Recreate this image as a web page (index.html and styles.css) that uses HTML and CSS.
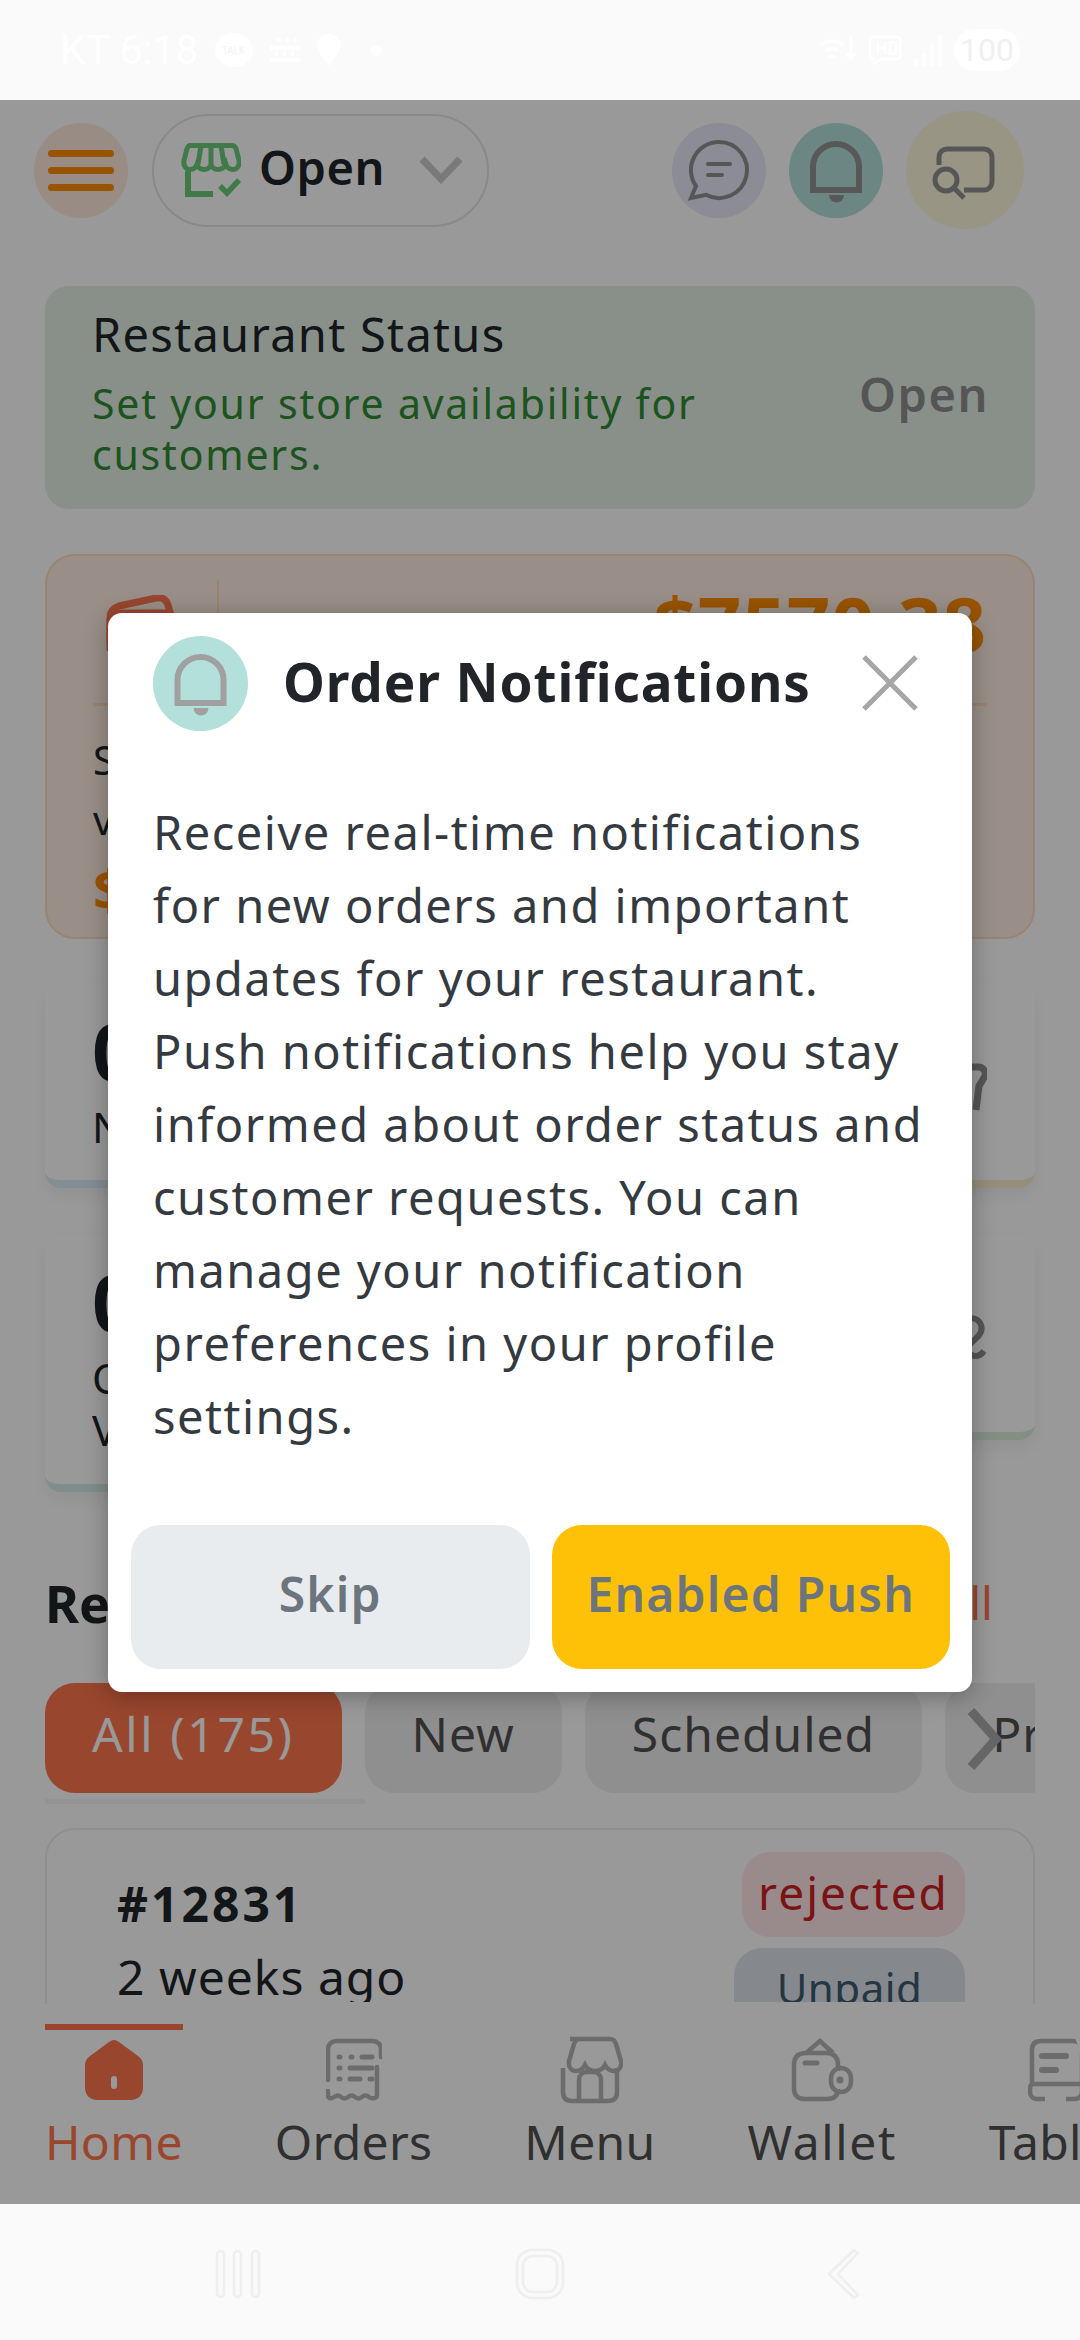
FILE: index.html
```html
<!DOCTYPE html>
<html lang="en">
<head>
    <meta charset="utf-8" />
    <meta content="width=device-width, initial-scale=1.0" name="viewport" />
    <title>Restaurant Dashboard</title>
    <link rel="stylesheet" href="styles.css">
</head>
<body>
    <div class="phone">
        <!-- system status bar -->
        <div class="status-bar">
            <div class="status-left">
                <span class="clock">KT 6:18</span>
                <span class="talk">TALK</span>
                <svg class="sys-icon" width="32" height="24" viewBox="0 0 32 24"><path d="M8 2h4M16 2h4M24 2h3M1 10h30M6 16h3M14 16h3M22 16h3M1 22h30" stroke="#fff" stroke-width="4"/></svg>
                <svg class="sys-icon" width="24" height="32" viewBox="0 0 24 32"><path d="M12 32C6 22 0 18 0 11a12 11 0 0 1 24 0c0 7-6 11-12 21z" fill="#fff"/></svg>
                <span class="status-dot"></span>
            </div>
            <div class="status-right">
                <svg width="38" height="32" viewBox="0 0 38 32"><path d="M2 11a20 20 0 0 1 24 0M7 17a13 13 0 0 1 14 0M11 23a7 7 0 0 1 6 0M33 2v22M29 20l4 5 4-5" fill="none" stroke="#fff" stroke-width="3"/></svg>
                <svg width="34" height="30" viewBox="0 0 34 30"><path d="M5 2h24a3 3 0 0 1 3 3v16a3 3 0 0 1-3 3H12l-6 5v-5a4 4 0 0 1-4-3V5a3 3 0 0 1 3-3zM10 7v12M10 13h7M17 7v12M22 7v12h3a3 3 0 0 0 3-3v-6a3 3 0 0 0-3-3z" fill="none" stroke="#fff" stroke-width="2.5"/></svg>
                <svg width="28" height="30" viewBox="0 0 28 30"><path d="M2 30v-6M10 30V18M18 30V9M26 30V0" stroke="#fff" stroke-width="3.5"/></svg>
                <span class="battery">100</span>
            </div>
        </div>

        <div class="app">
            <div class="content">
                <div class="top-bar">
                    <button class="round-btn menu-btn">
                        <span class="burger"></span><span class="burger"></span><span class="burger"></span>
                    </button>
                    <div class="store-pill">
                        <svg width="60" height="54" viewBox="0 0 60 54">
                            <path d="M9 2.500h42c2 0 3 1 4 3l3 12c1 5-2 9-6 9-3 0-6-2-7-5-1 3-5 5-8 5s-6-2-7-5c-1 3-4 5-7 5s-6-2-7-5c-1 3-4 5-7 5-4 0-7-4-6-9l3-12c1-2 2-3 3-3zM20 3l-3 18M30 3v18M40 3l3 18" fill="none" stroke="#69cb79" stroke-width="5"/>
                            <path d="M7 28v23h25" fill="none" stroke="#69cb79" stroke-width="6"/>
                            <path d="M39 43l7 7 12-13" fill="none" stroke="#69cb79" stroke-width="5.500"/>
                        </svg>
                        <span class="store-label">Open</span>
                        <svg class="pill-chevron" width="44" height="28" viewBox="0 0 44 28"><path d="M3 3l19 20L41 3" fill="none" stroke="#cbcbcb" stroke-width="7"/></svg>
                    </div>
                    <div class="top-actions">
                        <button class="round-btn chat-btn">
                            <svg width="94" height="95" viewBox="0 0 94 95"><path d="M47 19a28 28 0 1 1-13 52.800L19 75l5-12A28 28 0 0 1 47 19z" fill="none" stroke="#909090" stroke-width="4"/><path d="M36 41h22M36 52h14" stroke="#909090" stroke-width="4" stroke-linecap="round"/></svg>
                        </button>
                        <button class="round-btn bell-btn">
                            <svg width="94" height="95" viewBox="0 0 94 95"><path d="M24 67V44a23 23 0 0 1 46 0v23z" fill="none" stroke="#939393" stroke-width="6"/><path d="M40 72h15a7.500 7.500 0 0 1-15 0z" fill="#939393"/></svg>
                        </button>
                        <button class="round-btn cast-btn">
                            <svg width="118" height="118" viewBox="0 0 118 118"><path d="M33 54v-8a8 8 0 0 1 8-8h37a8 8 0 0 1 8 8v25a8 8 0 0 1-8 8H58" fill="none" stroke="#909090" stroke-width="5"/><circle cx="40" cy="69" r="11" fill="none" stroke="#909090" stroke-width="5"/><path d="M48 77l10 10" stroke="#909090" stroke-width="5"/></svg>
                        </button>
                    </div>
                </div>

                <div class="status-card">
                    <div>
                        <div class="status-title">Restaurant Status</div>
                        <div class="status-sub">Set your store availability for customers.</div>
                    </div>
                    <div class="status-value">Open</div>
                </div>

                <div class="sales-card">
                    <div class="sales-top">
                        <svg class="sales-icon" width="72" height="60" viewBox="0 0 72 60"><path d="M4 56V22c0-6 3-9 9-11L50 3c6-1 10 1 12 7l4 14" fill="none" stroke="#ff764d" stroke-width="7"/><rect x="4" y="18" width="64" height="38" rx="8" fill="none" stroke="#ff764d" stroke-width="7"/></svg>
                        <span class="sales-divider"></span>
                        <div class="sales-label">Total Sales</div>
                        <div class="sales-amount">$7570.38</div>
                    </div>
                    <div class="sales-desc">Sales this<br>vs last week</div>
                    <div class="sales-change">$0.00</div>
                </div>

                <div class="stats">
                    <div class="stat-card stat-blue">
                        <div class="stat-num">0</div>
                        <div class="stat-text">New Orders</div>
                    </div>
                    <div class="stat-card stat-yellow">
                        <svg class="stat-icon" width="120" height="60" viewBox="0 0 120 60"><path d="M2 4h109a7 7 0 0 1 7 9l-6 10-3 24" fill="none" stroke="#8e8e8e" stroke-width="7"/></svg>
                    </div>
                    <div class="stat-card stat-teal">
                        <div class="stat-num">0</div>
                        <div class="stat-text">Orders<br>Value</div>
                    </div>
                    <div class="stat-card stat-green">
                        <svg class="stat-icon" width="120" height="60" viewBox="0 0 120 60"><path d="M103 4c10 0 13 8 11 14-3 7-9 8-12 14-2 5 1 10 6 10 4 0 7-2 9-5" fill="none" stroke="#8e8e8e" stroke-width="6"/></svg>
                    </div>
                </div>

                <div class="section-head">
                    <h2 class="section-title">Recent Orders</h2>
                    <a class="section-link">View All</a>
                </div>

                <div class="tabs-wrap">
                    <div class="tabs">
                        <span class="tab tab-active">All (175)</span>
                        <span class="tab">New</span>
                        <span class="tab">Scheduled</span>
                        <span class="tab">Preparing</span>
                    </div>
                    <svg class="tabs-arrow" width="36" height="62" viewBox="0 0 36 62"><path d="M5 3l25 28L5 59" fill="none" stroke="#a8a8a8" stroke-width="9"/></svg>
                </div>
                <div class="tabs-scroll"></div>

                <div class="order-card">
                    <div>
                        <div class="order-id">#12831</div>
                        <div class="order-time">2 weeks ago</div>
                    </div>
                    <div class="order-badges">
                        <span class="badge badge-rejected">rejected</span>
                        <span class="badge badge-unpaid">Unpaid</span>
                    </div>
                </div>
            </div>

            <nav class="bottom-nav">
                <div class="nav-item nav-active">
                    <svg width="58" height="60" viewBox="0 0 58 60"><path d="M24 2a8 8 0 0 1 10 0l19 14c3 2 5 5 5 9v23c0 7-5 12-12 12H12C5 60 0 55 0 48V25c0-4 2-7 5-9z" fill="#ff764d"/><rect x="26" y="36" width="6" height="13" rx="3" fill="#ffffff"/></svg>
                    <span>Home</span>
                </div>
                <div class="nav-item">
                    <svg width="56" height="62" viewBox="0 0 56 62"><path d="M55 18V10a8 8 0 0 0-8-8H10a8 8 0 0 0-8 8v31M2 52v4c0 4 3 4 6 2s5-2 7 0 5 2 7 0 5-2 7 0 5 2 7 0 5-2 7 0 8 2 8-2V28" fill="none" stroke="#b4b4b4" stroke-width="4.500" stroke-linecap="round"/><path d="M13 18h1M25 18h1M36 18h10M13 29h1M24 29h22M13 40h1M24 40h10M44 40h2" stroke="#b4b4b4" stroke-width="5" stroke-linecap="round"/></svg>
                    <span>Orders</span>
                </div>
                <div class="nav-item">
                    <svg width="66" height="68" viewBox="0 0 66 68"><path d="M13 3h40c4 0 5 2 6 5l5 17c1 7-3 10-7 10s-7-2-9-6c-2 4-6 6-10 6s-8-2-10-6c-2 4-5 6-9 6s-8-3-7-10l5-17c1-3 2-5 6-5zM6 32v24c0 6 3 9 9 9h36c6 0 9-3 9-9V32" fill="none" stroke="#b4b4b4" stroke-width="4.500"/><path d="M22 65V44c0-5 3-8 8-8h6c5 0 8 3 8 8v21" fill="none" stroke="#b4b4b4" stroke-width="4.500"/></svg>
                    <span>Menu</span>
                </div>
                <div class="nav-item nav-wallet">
                    <svg width="64" height="62" viewBox="0 0 64 62"><path d="M4 26c0-8 4-12 12-12h20c8 0 12 4 12 12v6M48 50c0 7-4 10-11 10H15C8 60 4 56 4 50V26M16 14L30 2l13 12" fill="none" stroke="#b4b4b4" stroke-width="4.500"/><path d="M15 24h12" stroke="#b4b4b4" stroke-width="5" stroke-linecap="round"/><rect x="41" y="29" width="20" height="24" rx="10" fill="none" stroke="#b4b4b4" stroke-width="4.500"/><circle cx="50" cy="41" r="3.500" fill="#b4b4b4"/></svg>
                    <span>Wallet</span>
                </div>
                <div class="nav-item">
                    <svg width="66" height="64" viewBox="0 0 66 64"><path d="M4 44V12c0-6 3-9 9-9h32c6 0 9 3 9 9v32M2 46h52M4 46c-2 1-2 3-2 7s2 8 7 8h8M54 46v7c0 5-3 8-8 8h-8" fill="none" stroke="#b4b4b4" stroke-width="4.500"/><path d="M14 18h24M14 32h14" stroke="#b4b4b4" stroke-width="6" stroke-linecap="round"/></svg>
                    <span>Tables</span>
                </div>
            </nav>

            <!-- dim layer with the notification dialog -->
            <div class="scrim">
                <div class="dialog">
                    <div class="dialog-head">
                        <div class="dialog-bell">
                            <svg width="95" height="95" viewBox="0 0 94 95"><path d="M24 67V44a23 23 0 0 1 46 0v23z" fill="none" stroke="#a0a0a0" stroke-width="6"/><path d="M40 72h15a7.500 7.500 0 0 1-15 0z" fill="#a0a0a0"/></svg>
                        </div>
                        <h3 class="dialog-title">Order Notifications</h3>
                        <svg class="dialog-close" width="56" height="56" viewBox="0 0 56 56"><path d="M2 2l52 52M54 2L2 54" stroke="#a6a6a6" stroke-width="5"/></svg>
                    </div>
                    <p class="dialog-text">Receive real-time notifications for new orders and important updates for your restaurant.<br>Push notifications help you stay informed about order status and customer requests. You can manage your notification preferences in your profile settings.</p>
                    <div class="dialog-actions">
                        <button class="dialog-btn btn-skip">Skip</button>
                        <button class="dialog-btn btn-push">Enabled Push</button>
                    </div>
                </div>
            </div>
        </div>

        <!-- system navigation bar -->
        <div class="system-nav">
            <svg width="46" height="50" viewBox="0 0 46 50"><g fill="none" stroke="#efefef" stroke-width="2.500"><rect x="2" y="2" width="7" height="46" rx="3.500"/><rect x="19" y="2" width="7" height="46" rx="3.500"/><rect x="37" y="2" width="7" height="46" rx="3.500"/></g></svg>
            <svg class="sys-home" width="50" height="52" viewBox="0 0 50 52"><g fill="none" stroke="#efefef" stroke-width="2.500"><rect x="2" y="2" width="46" height="48" rx="15"/><rect x="8" y="8" width="34" height="36" rx="10"/></g></svg>
            <svg width="34" height="52" viewBox="0 0 34 52"><path d="M28 2l4 3-20 21 20 21-4 3L3 26z" fill="none" stroke="#efefef" stroke-width="2.500" stroke-linejoin="round"/></svg>
        </div>
    </div>
</body>
</html>
```

FILE: styles.css
```css
* {
    box-sizing: border-box;
}

body {
    margin: 0;
    background-color: #fafafa;
    font-family: "Noto Sans", "Open Sans", sans-serif;
    font-variant-ligatures: none;
    color: #212529;
}

.phone {
    width: 1080px;
    height: 2340px;
    display: flex;
    flex-direction: column;
    overflow: hidden;
}

/* status bar */
.status-bar {
    height: 100px;
    flex: none;
    display: flex;
    justify-content: space-between;
    align-items: center;
    padding: 0 60px;
    background-color: #fafafa;
    color: #fff;
}

.status-left,
.status-right {
    display: flex;
    align-items: center;
}

.status-left {
    gap: 16px;
}

.status-right {
    gap: 12px;
}

.clock {
    font-size: 41px;
    font-family: "Roboto", sans-serif;
}

.talk {
    width: 38px;
    height: 34px;
    border-radius: 50%;
    background-color: #fff;
    color: #f2f2f2;
    font-size: 10px;
    line-height: 34px;
    text-align: center;
}

.status-dot {
    width: 11px;
    height: 11px;
    margin-left: 14px;
    border-radius: 50%;
    background-color: #fff;
}

.battery {
    width: 66px;
    height: 42px;
    border-radius: 21px;
    background-color: #fff;
    color: #f0f0f0;
    font-size: 32px;
    line-height: 42px;
    text-align: center;
    font-family: "Roboto", sans-serif;
}

/* app */
.app {
    position: relative;
    flex: 1;
    overflow: hidden;
    background-color: #fff;
}

.content {
    padding: 11px 45px 0 45px;
}

.top-bar {
    display: flex;
    align-items: center;
    height: 118px;
    margin-left: -11px;
}

.round-btn {
    flex: none;
    padding: 0;
    border: none;
    border-radius: 50%;
    width: 94px;
    height: 95px;
    display: flex;
    flex-direction: column;
    align-items: center;
    justify-content: center;
}

.menu-btn {
    gap: 10px;
    background-color: #ffe9de;
}

.burger {
    width: 66px;
    height: 7px;
    border-radius: 4px;
    background-color: #ff8c00;
}

.store-pill {
    width: 337px;
    height: 113px;
    margin-left: 24px;
    padding: 0 24px 0 27px;
    display: flex;
    align-items: center;
    border: 2px solid #e4e4e4;
    border-radius: 57px;
}

.store-label {
    margin-left: 18px;
    margin-top: -6px;
    font-size: 47px;
    line-height: 60px;
    font-weight: 600;
    letter-spacing: 0.5px;
}

.pill-chevron {
    margin-left: auto;
}

.top-actions {
    margin-left: auto;
    margin-right: 11px;
    display: flex;
    align-items: center;
    gap: 23px;
}

.chat-btn {
    background-color: #e8e9f8;
}

.bell-btn {
    background-color: #b3e0db;
}

.cast-btn {
    width: 118px;
    height: 118px;
    background-color: #fdf8de;
}

/* restaurant status */
.status-card {
    height: 223px;
    margin-top: 57px;
    padding: 8px 46px 20px 47px;
    display: flex;
    align-items: center;
    justify-content: space-between;
    gap: 40px;
    border-radius: 24px;
    background-color: #e5f0e6;
}

.status-title {
    font-size: 47px;
    line-height: 62px;
    letter-spacing: 1.3px;
}

.status-sub {
    margin-top: 13px;
    width: 660px;
    font-size: 41px;
    line-height: 51px;
    letter-spacing: 1.8px;
    color: #2f8a32;
}

.status-value {
    margin-top: 4px;
    font-size: 47px;
    font-weight: 600;
    letter-spacing: 1.5px;
    color: #8e8e8e;
}

/* sales */
.sales-card {
    height: 385px;
    margin-top: 45px;
    padding: 24px 46px;
    border: 2px solid #ffddbc;
    border-radius: 30px;
    background-color: #ffeee3;
}

.sales-top {
    display: flex;
    align-items: flex-start;
    height: 126px;
    padding-left: 13px;
    border-bottom: 3px solid #ffddbc;
}

.sales-icon {
    margin-top: 15px;
    flex: none;
}

.sales-divider {
    width: 2px;
    height: 100px;
    margin-left: 39px;
    background-color: #ffddbc;
}

.sales-label {
    margin-top: 22px;
    margin-left: 45px;
    font-size: 46px;
}

.sales-amount {
    margin-left: auto;
    margin-top: -9px;
    font-size: 76px;
    font-weight: 700;
    letter-spacing: 1px;
    color: #ff8c00;
}

.sales-desc {
    margin-top: 24px;
    font-size: 40px;
    line-height: 60px;
}

.sales-change {
    font-size: 56px;
    font-weight: 700;
    color: #ff8c00;
}

/* stat cards */
.stats {
    display: grid;
    grid-template-columns: 1fr 1fr;
    column-gap: 20px;
    row-gap: 46px;
    align-items: start;
    margin-top: 44px;
}

.stat-card {
    height: 205px;
    padding: 18px 47px;
    border-radius: 16px;
    border-bottom: 8px solid #000;
    background-color: #fff;
    box-shadow: 0 8px 16px rgba(0, 0, 0, 0.05);
}

.stat-blue {
    border-bottom-color: #dce9f7;
}

.stat-yellow {
    position: relative;
    border-bottom-color: #f8edcc;
}

.stat-teal {
    height: 258px;
    border-bottom-color: #d4ece9;
}

.stat-green {
    position: relative;
    height: 206px;
    border-bottom-color: #dcefdc;
}

.stat-num {
    font-size: 78px;
    line-height: 100px;
    font-weight: 700;
}

.stat-text {
    font-size: 42px;
    line-height: 52px;
}

.stat-icon {
    position: absolute;
    right: 48px;
    top: 80px;
}

/* recent orders */
.section-head {
    display: flex;
    justify-content: space-between;
    align-items: center;
    height: 76px;
    margin-top: 72px;
}

.section-title {
    margin: 0;
    font-size: 52px;
    font-weight: 700;
}

.section-link {
    margin-right: 42px;
    font-size: 46px;
    color: #ff764d;
}

.tabs-wrap {
    position: relative;
    margin-top: 43px;
}

.tabs {
    display: flex;
    gap: 23px;
    overflow: hidden;
}

.tab {
    flex: none;
    height: 110px;
    padding: 0 47px 9px;
    display: flex;
    align-items: center;
    border-radius: 30px;
    background-color: #eeeeee;
    font-size: 48px;
    letter-spacing: 1px;
    color: #505050;
}

.tab-active {
    background-color: #ff764d;
    color: #fff;
    letter-spacing: 2.6px;
}

.tabs-arrow {
    position: absolute;
    right: 33px;
    top: 25px;
}

.tabs-scroll {
    width: 320px;
    height: 5px;
    margin-top: 6px;
    background-color: #f6f6f6;
}

.order-card {
    height: 300px;
    margin-top: 24px;
    padding: 22px 68px 0 70px;
    display: flex;
    justify-content: space-between;
    border: 2px solid #ededed;
    border-radius: 30px;
}

.order-id {
    margin-top: 19px;
    font-size: 48px;
    font-weight: 700;
    letter-spacing: 3px;
}

.order-time {
    margin-top: 8px;
    font-size: 48px;
    letter-spacing: 1px;
}

.order-badges {
    display: flex;
    flex-direction: column;
    align-items: flex-end;
    gap: 11px;
}

.badge {
    height: 85px;
    padding: 0 0 6px;
    display: flex;
    align-items: center;
    justify-content: center;
    border-radius: 28px;
}

.badge-rejected {
    width: 223px;
    background-color: #ffe6e9;
    font-size: 46px;
    letter-spacing: 2px;
    color: #cc2222;
}

.badge-unpaid {
    width: 231px;
    background-color: #dee4eb;
    font-size: 42px;
    letter-spacing: 0.5px;
    color: #3f5a70;
}

/* bottom nav */
.bottom-nav {
    position: absolute;
    left: 0;
    right: 0;
    bottom: 0;
    height: 202px;
    padding: 22px 0 0 45px;
    display: flex;
    gap: 92px;
    overflow: hidden;
    border-radius: 60px 60px 0 0;
    background-color: #fff;
}

.nav-item {
    flex: none;
    display: flex;
    flex-direction: column;
    align-items: center;
    padding-top: 12px;
    font-size: 48px;
    line-height: 60px;
    letter-spacing: 0.3px;
    color: #505050;
}

.nav-item svg {
    height: 68px;
    margin-bottom: 8px;
}

.nav-wallet {
    letter-spacing: 1.6px;
}

.nav-active {
    padding-top: 6px;
    border-top: 6px solid #ff764d;
    color: #ff764d;
}

/* dialog */
.scrim {
    position: absolute;
    inset: 0;
    display: flex;
    align-items: center;
    justify-content: center;
    background-color: rgba(0, 0, 0, 0.4);
}

.dialog {
    width: 864px;
    height: 1079px;
    display: flex;
    flex-direction: column;
    border-radius: 14px;
    background-color: #fff;
    box-shadow: 0 4px 24px rgba(0, 0, 0, 0.3);
}

.dialog-head {
    display: flex;
    align-items: center;
    padding: 23px 54px 0 45px;
}

.dialog-bell {
    width: 95px;
    height: 95px;
    flex: none;
    border-radius: 50%;
    background-color: #b3e0db;
}

.dialog-title {
    flex: 1;
    margin: -4px 0 0 35px;
    font-size: 53px;
    font-weight: 700;
    letter-spacing: 0.9px;
    color: #212529;
}

.dialog-text {
    margin: 65px 44px 0 45px;
    font-size: 47px;
    line-height: 73px;
    letter-spacing: 1.5px;
    color: #343a40;
}

.dialog-actions {
    margin-top: auto;
    padding: 0 22px 23px 23px;
    display: flex;
    gap: 22px;
}

.dialog-btn {
    flex: 1;
    height: 144px;
    padding: 0 0 6px;
    border: none;
    border-radius: 30px;
    font-family: inherit;
    font-size: 48px;
    font-weight: 600;
    letter-spacing: 1.2px;
    color: #6c757d;
}

.btn-skip {
    background-color: #e9ecef;
}

.btn-push {
    background-color: #ffc107;
}

/* system nav */
.system-nav {
    height: 136px;
    flex: none;
    display: flex;
    justify-content: space-between;
    align-items: center;
    padding: 4px 220px 0 215px;
    background-color: #fafafa;
}

.sys-home {
    margin-right: 8px;
}
```
